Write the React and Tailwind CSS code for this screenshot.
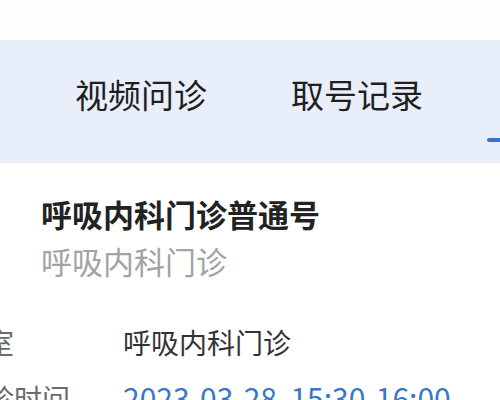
import React from "react";

const cjk = { fontFamily: '"Noto Sans CJK SC", "Noto Sans", sans-serif' };

export default function App() {
  return (
    <div
      className="w-[500px] h-[400px] overflow-hidden bg-white flex flex-col"
      style={cjk}
    >
      <div className="h-[40px] shrink-0 bg-[#fdfdfe]" />
      <div className="h-[123px] shrink-0 bg-[#e9effa] flex flex-col border-b border-[#efe9f0]">
        <div className="flex pt-[38px] pl-[75px] gap-[84px] text-[33px] leading-[33px] text-[#1f1f1f] whitespace-nowrap">
          <span>视频问诊</span>
          <span>取号记录</span>
        </div>
        <div className="mt-[27px] ml-[487px] w-[20px] h-[4px] rounded-full bg-[#3a6fd4]" />
      </div>
      <div className="flex flex-col pt-[35px]">
        <div className="pl-[41px] text-[31px] leading-[31px] font-bold text-[#222] whitespace-nowrap">
          呼吸内科门诊普通号
        </div>
        <div className="pl-[41px] mt-[16px] text-[31px] leading-[31px] text-[#a3a3a3] whitespace-nowrap">
          呼吸内科门诊
        </div>
        <div className="flex ml-[-42px] mt-[52px] text-[28px] leading-[28px] whitespace-nowrap">
          <span className="w-[165px] shrink-0 text-[#6b6b6b]">科室</span>
          <span className="text-[#333]">呼吸内科门诊</span>
        </div>
        <div className="flex items-baseline ml-[-42px] mt-[27px] whitespace-nowrap">
          <span className="w-[165px] shrink-0 text-[28px] leading-[28px] text-[#6b6b6b]">就诊时间</span>
          <span className="text-[30px] leading-[28px] text-[#3b78c4]">2023-03-28&nbsp;&nbsp;15:30-16:00</span>
        </div>
      </div>
    </div>
  );
}
